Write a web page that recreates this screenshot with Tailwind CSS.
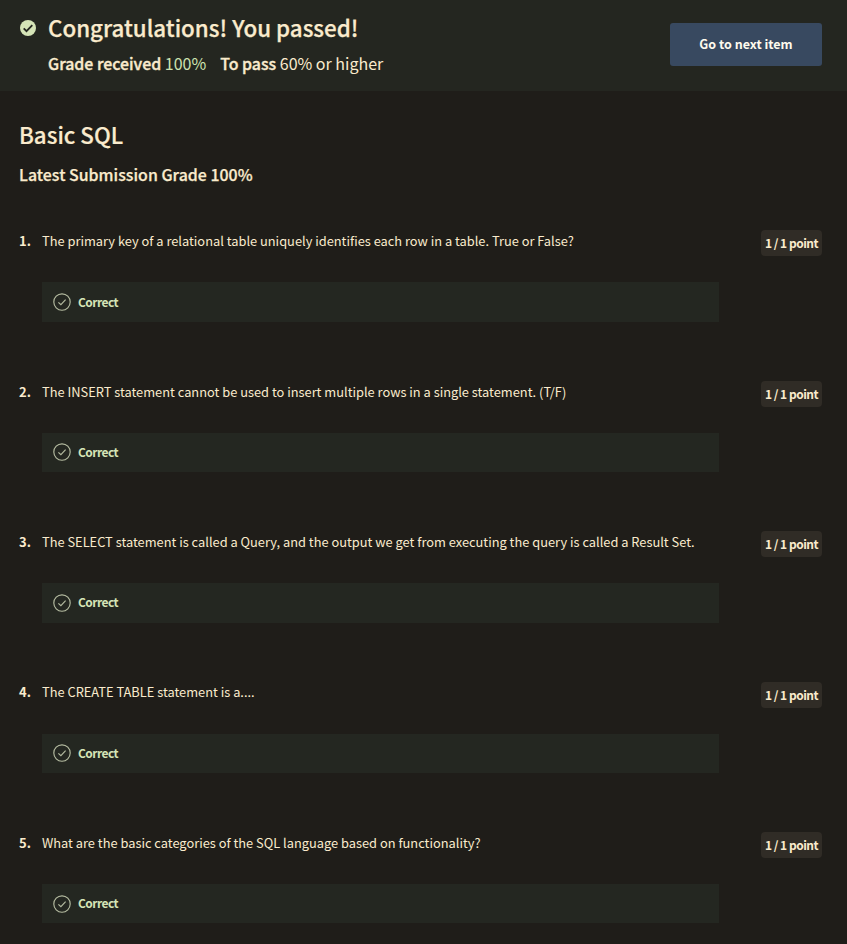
<!DOCTYPE html>
<html lang="en">
<head>
<meta charset="utf-8">
<title>Basic SQL</title>
<script src="https://cdn.jsdelivr.net/npm/@tailwindcss/browser@4"></script>
</head>
<body class="h-[944px] overflow-hidden bg-[#1f1d19] text-[#faebcd] font-['Noto_Sans_CJK_SC','Noto_Sans',sans-serif]">
<header class="flex h-[91px] items-start justify-between bg-[#242620] pl-5 pr-[25px]">
  <div class="flex">
    <svg class="mt-5 size-4 shrink-0" viewBox="0 0 16 16"><circle cx="8" cy="8" r="8" fill="#d5e4b7"/><path d="M3.7 8.3l2.8 2.8 5.8-5.9" fill="none" stroke="#242620" stroke-width="1.8"/></svg>
    <div class="ml-3 pt-[11px]">
      <h1 class="text-[22.35px] leading-8 font-medium [-webkit-text-stroke:0.25px_#faebcd]">Congratulations! You passed!</h1>
      <div class="mt-2 flex text-[16px] leading-6">
        <p><span class="text-[15.9px] font-medium [-webkit-text-stroke:0.35px_#faebcd]">Grade received</span> <span class="text-[#cde3b0]">100%</span></p>
        <p class="ml-3.5"><span class="text-[15.9px] font-medium [-webkit-text-stroke:0.35px_#faebcd]">To pass</span> <span>60% or higher</span></p>
      </div>
    </div>
  </div>
  <button class="mt-[23px] h-[43px] w-[152px] rounded-[3px] bg-[#384960] text-[12.5px] font-bold text-[#fffbee]">Go to next item</button>
</header>
<main class="pl-[19px] pr-[25px] pt-[27px]">
  <h2 class="text-[22.3px] leading-8 font-medium [-webkit-text-stroke:0.2px_#faebcd]">Basic SQL</h2>
  <p class="mt-[13px] text-[15.9px] leading-6 font-medium tracking-[0.02px] [-webkit-text-stroke:0.25px_#faebcd]">Latest Submission Grade 100%</p>
  <ol id="questions" class="mt-[43.4px]"></ol>
</main>
<template id="question">
  <li class="flex h-[150.4px] items-start">
    <span data-number class="mt-[0.8px] w-[23px] shrink-0 text-[13px] leading-5 font-bold"></span>
    <div class="w-[677px]">
      <p data-text class="mt-[0.8px] whitespace-nowrap text-[12.83px] leading-5"></p>
      <div class="mt-[31.2px] flex h-[39.4px] items-center bg-[#242721] pl-[11px] text-[#d5e4b7]">
        <svg class="size-[18px]" viewBox="0 0 18 18" fill="none" stroke="#b4bba0" stroke-width="1.15"><circle cx="9" cy="9" r="8.2"/><path d="M5.4 9.3l2.5 2.4 4.7-5.1"/></svg>
        <span class="ml-[7px] pb-[0.8px] text-[12px] leading-5 font-bold tracking-[-0.55px]">Correct</span>
      </div>
    </div>
    <span class="ml-auto flex h-[26px] w-[61px] items-center justify-center rounded-[4px] bg-[#302c26] text-[12px] font-bold tracking-[-0.5px]">1 / 1 point</span>
  </li>
</template>
<script>
const questions = [
  'The primary key of a relational table uniquely identifies each row in a table. True or False?',
  'The INSERT statement cannot be used to insert multiple rows in a single statement. (T/F)',
  'The SELECT statement is called a Query, and the output we get from executing the query is called a Result Set.',
  'The CREATE TABLE statement is a....',
  'What are the basic categories of the SQL language based on functionality?'
];
const list = document.getElementById('questions');
questions.forEach((text, i) => {
  const row = document.getElementById('question').content.cloneNode(true);
  row.querySelector('[data-number]').textContent = (i + 1) + '.';
  row.querySelector('[data-text]').textContent = text;
  list.append(row);
});
</script>
</body>
</html>
